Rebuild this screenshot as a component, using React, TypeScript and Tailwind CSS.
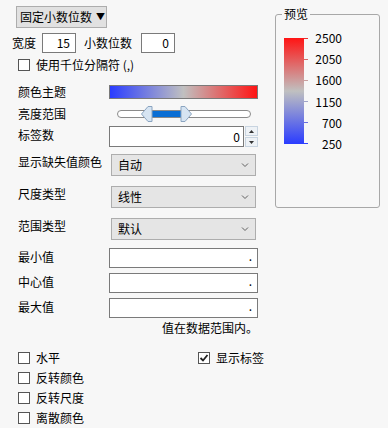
import React from "react";

const font = { fontFamily: '"Noto Sans CJK SC", "Noto Sans", sans-serif' };

function Chevron() {
  return (
    <svg width="8" height="6" viewBox="0 0 8 6" className="shrink-0">
      <path d="M1 1.5 L4 4.5 L7 1.5" fill="none" stroke="#606060" strokeWidth="1" />
    </svg>
  );
}

function Select({ value }: { value: string }) {
  return (
    <div className="w-[145px] h-[22px] border border-[#adadad] bg-[#e5e5e5] flex items-center justify-between pl-[6px] pr-[6px] text-[12px] text-black">
      <span>{value}</span>
      <Chevron />
    </div>
  );
}

function Box({ checked }: { checked?: boolean }) {
  return (
    <div className="w-[12px] h-[12px] border border-[#555] bg-white flex items-center justify-center shrink-0">
      {checked && (
        <svg width="10" height="10" viewBox="0 0 10 10">
          <path d="M1.5 5 L4 7.5 L8.5 2" fill="none" stroke="#222" strokeWidth="1.8" />
        </svg>
      )}
    </div>
  );
}

function TextField() {
  return (
    <div className="w-[149px] h-[20px] border border-[#7a7a7a] bg-white flex items-center justify-end pr-[5px] text-[12px] leading-none">
      <span className="-mt-[4px]">.</span>
    </div>
  );
}

export default function App() {
  const ticks = [
    { v: "2500", c: "#e83030" },
    { v: "2050", c: "#d86a6a" },
    { v: "1600", c: "#c9a0a0" },
    { v: "1150", c: "#a0a4c8" },
    { v: "700", c: "#6a70e0" },
    { v: "250", c: "#3040ff" },
  ];
  return (
    <div className="w-[388px] h-[428px] bg-[#f7f7f7] flex text-black overflow-hidden" style={font}>
      {/* left column */}
      <div className="w-[270px] pl-[12px] pt-[6px] flex flex-col">
        <div className="ml-[4px] w-[91px] h-[22px] border border-[#adadad] bg-[#e1e1e1] flex items-center pl-[3px] gap-[4px] text-[12px]">
          <span>固定小数位数</span>
          <span className="text-[9px]">▼</span>
        </div>

        <div className="mt-[5px] flex items-center h-[20px] text-[12px]">
          <span className="w-[30px]">宽度</span>
          <div className="w-[34px] h-[20px] border border-[#7a7a7a] bg-white flex items-center justify-end pr-[5px]">15</div>
          <span className="ml-[8px] w-[57px]">小数位数</span>
          <div className="w-[34px] h-[20px] border border-[#7a7a7a] bg-white flex items-center justify-end pr-[5px]">0</div>
        </div>

        <div className="mt-[5px] ml-[6px] flex items-center h-[13px] gap-[6px] text-[12px]">
          <Box />
          <span>使用千位分隔符 (,)</span>
        </div>

        <div className="mt-[13px] ml-[6px] flex items-center h-[15px] text-[12px]">
          <span className="w-[91px]">颜色主题</span>
          <div className="w-[149px] h-[14px] border border-[#7a7a7a] bg-[linear-gradient(to_right,#2a3cff,#c0c0c0,#ff1414)]" />
        </div>

        <div className="mt-[7px] ml-[6px] flex items-center h-[16px] text-[12px]">
          <span className="w-[99px]">亮度范围</span>
          <div className="relative w-[134px] h-[16px]">
            <div className="absolute left-0 right-0 top-[4px] h-[8px] rounded-full border border-[#8a8a8a] bg-white" />
            <div className="absolute left-[34px] w-[32px] top-[5px] h-[6px] bg-[#0a6ed4]" />
            <svg className="absolute left-[24px] top-0" width="12" height="16" viewBox="0 0 12 16">
              <path d="M11 0.5 L11 15.5 L7 15.5 L0.5 8 L7 0.5 Z" fill="#d6e4f2" stroke="#8aa4c0" />
            </svg>
            <svg className="absolute left-[63px] top-0" width="12" height="16" viewBox="0 0 12 16">
              <path d="M1 0.5 L1 15.5 L5 15.5 L11.5 8 L5 0.5 Z" fill="#d6e4f2" stroke="#8aa4c0" />
            </svg>
          </div>
        </div>

        <div className="mt-[4px] ml-[6px] flex items-start h-[21px] text-[12px]">
          <span className="w-[91px] mt-[0px]">标签数</span>
          <div className="w-[135px] h-[21px] border border-[#7a7a7a] bg-white flex items-center justify-end pr-[3px]">0</div>
          <div className="ml-[1px] w-[13px] h-[21px] flex flex-col gap-[1px]">
            <div className="flex-1 border border-[#c8d4e0] bg-[#eef2f6] flex items-center justify-center">
              <svg width="5" height="3" viewBox="0 0 5 3"><path d="M0 3 L2.5 0 L5 3 Z" fill="#333" /></svg>
            </div>
            <div className="flex-1 border border-[#c8d4e0] bg-[#eef2f6] flex items-center justify-center">
              <svg width="5" height="3" viewBox="0 0 5 3"><path d="M0 0 L2.5 3 L5 0 Z" fill="#333" /></svg>
            </div>
          </div>
        </div>

        <div className="mt-[7px] ml-[6px] flex items-start text-[12px]">
          <span className="w-[93px] -mt-[1px]">显示缺失值颜色</span>
          <Select value="自动" />
        </div>
        <div className="mt-[10px] ml-[6px] flex items-start text-[12px]">
          <span className="w-[93px] -mt-[1px]">尺度类型</span>
          <Select value="线性" />
        </div>
        <div className="mt-[10px] ml-[6px] flex items-start text-[12px]">
          <span className="w-[93px] -mt-[1px]">范围类型</span>
          <Select value="默认" />
        </div>

        <div className="mt-[8px] ml-[6px] flex items-start text-[12px]">
          <span className="w-[91px] mt-[0px]">最小值</span>
          <TextField />
        </div>
        <div className="mt-[5px] ml-[6px] flex items-start text-[12px]">
          <span className="w-[91px] mt-[0px]">中心值</span>
          <TextField />
        </div>
        <div className="mt-[5px] ml-[6px] flex items-start text-[12px]">
          <span className="w-[91px] mt-[0px]">最大值</span>
          <TextField />
        </div>

        <div className="mt-[1px] pl-[150px] text-[12px] leading-[18px]">值在数据范围内。</div>

        <div className="mt-[14px] ml-[6px] flex flex-col gap-[7px] text-[12px]">
          <div className="flex items-center h-[13px]">
            <div className="flex items-center gap-[6px] w-[180px]">
              <Box />
              <span>水平</span>
            </div>
            <div className="flex items-center gap-[6px]">
              <Box checked />
              <span>显示标签</span>
            </div>
          </div>
          <div className="flex items-center gap-[6px] h-[13px]">
            <Box />
            <span>反转颜色</span>
          </div>
          <div className="flex items-center gap-[6px] h-[13px]">
            <Box />
            <span>反转尺度</span>
          </div>
          <div className="flex items-center gap-[6px] h-[13px]">
            <Box />
            <span>离散颜色</span>
          </div>
        </div>
      </div>

      {/* preview */}
      <div className="ml-[5px] mt-[14px] relative w-[105px] h-[194px] border border-[#a8a8a8] rounded-[3px]">
        <div className="absolute -top-[9px] left-[6px] px-[2px] bg-[#f7f7f7] text-[12px] leading-[16px]">预览</div>
        <div className="mt-[23px] ml-[8px] flex">
          <div className="w-[20px] h-[106px] bg-[linear-gradient(to_bottom,#ff1414,#c0c0c0,#2a3cff)]" />
          <div className="flex flex-col justify-between h-[106px] -mt-[0px]">
            {ticks.map((t) => (
              <div key={t.v} className="flex items-center h-0">
                <div className="w-[4px] h-[1px]" style={{ backgroundColor: t.c }} />
                <span className="w-[34px] text-right text-[12px] leading-none">{t.v}</span>
              </div>
            ))}
          </div>
        </div>
      </div>
    </div>
  );
}
